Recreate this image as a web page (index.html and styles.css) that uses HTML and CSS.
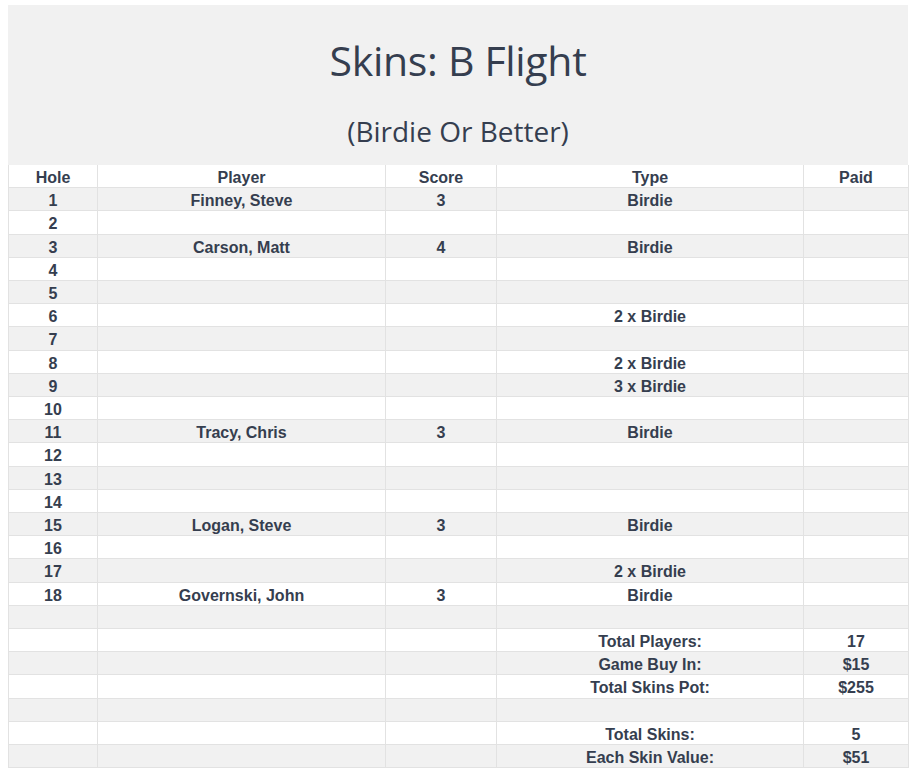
FILE: index.html
```html
<!DOCTYPE html>
<html>
<head>
<meta charset="utf-8">
<link rel="stylesheet" href="styles.css">
</head>
<body>
<div class="page">
  <header class="banner">
    <h1 class="title">Skins: B Flight</h1>
    <h2 class="subtitle">(Birdie Or Better)</h2>
  </header>
  <table class="skins">
    <colgroup>
      <col class="c-hole"><col class="c-player"><col class="c-score"><col class="c-type"><col class="c-paid">
    </colgroup>
    <thead>
      <tr><th>Hole</th><th>Player</th><th>Score</th><th>Type</th><th>Paid</th></tr>
    </thead>
    <tbody>
      <tr><td>1</td><td>Finney, Steve</td><td>3</td><td>Birdie</td><td></td></tr>
      <tr><td>2</td><td></td><td></td><td></td><td></td></tr>
      <tr><td>3</td><td>Carson, Matt</td><td>4</td><td>Birdie</td><td></td></tr>
      <tr><td>4</td><td></td><td></td><td></td><td></td></tr>
      <tr><td>5</td><td></td><td></td><td></td><td></td></tr>
      <tr><td>6</td><td></td><td></td><td>2 x Birdie</td><td></td></tr>
      <tr><td>7</td><td></td><td></td><td></td><td></td></tr>
      <tr><td>8</td><td></td><td></td><td>2 x Birdie</td><td></td></tr>
      <tr><td>9</td><td></td><td></td><td>3 x Birdie</td><td></td></tr>
      <tr><td>10</td><td></td><td></td><td></td><td></td></tr>
      <tr><td>11</td><td>Tracy, Chris</td><td>3</td><td>Birdie</td><td></td></tr>
      <tr><td>12</td><td></td><td></td><td></td><td></td></tr>
      <tr><td>13</td><td></td><td></td><td></td><td></td></tr>
      <tr><td>14</td><td></td><td></td><td></td><td></td></tr>
      <tr><td>15</td><td>Logan, Steve</td><td>3</td><td>Birdie</td><td></td></tr>
      <tr><td>16</td><td></td><td></td><td></td><td></td></tr>
      <tr><td>17</td><td></td><td></td><td>2 x Birdie</td><td></td></tr>
      <tr><td>18</td><td>Governski, John</td><td>3</td><td>Birdie</td><td></td></tr>
      <tr><td></td><td></td><td></td><td></td><td></td></tr>
      <tr><td></td><td></td><td></td><td>Total Players:</td><td>17</td></tr>
      <tr><td></td><td></td><td></td><td>Game Buy In:</td><td>$15</td></tr>
      <tr><td></td><td></td><td></td><td>Total Skins Pot:</td><td>$255</td></tr>
      <tr><td></td><td></td><td></td><td></td><td></td></tr>
      <tr><td></td><td></td><td></td><td>Total Skins:</td><td>5</td></tr>
      <tr><td></td><td></td><td></td><td>Each Skin Value:</td><td>$51</td></tr>
    </tbody>
  </table>
</div>
</body>
</html>
```
FILE: styles.css
```css
html, body {
  margin: 0;
  padding: 0;
  background: #ffffff;
}

.page {
  margin: 5px 8px 0 8px;
  width: 900px;
  color: #353e4f;
}

.banner {
  background: #f1f1f1;
  height: 160px;
  display: flex;
  flex-direction: column;
  align-items: center;
  font-family: "Open Sans", "Noto Sans", sans-serif;
}

.title {
  margin: 30px 0 0 0;
  font-size: 41px;
  font-weight: 400;
  line-height: 50px;
  letter-spacing: -0.3px;
}

.subtitle {
  margin: 27px 0 0 0;
  font-size: 28px;
  font-weight: 400;
  line-height: 38px;
  letter-spacing: 0;
}

.skins {
  width: 900px;
  border-collapse: collapse;
  table-layout: fixed;
  font-family: "Liberation Sans", Arial, sans-serif;
  font-weight: 700;
  font-size: 16px;
}

.c-hole { width: 89px; }
.c-player { width: 288px; }
.c-score { width: 111px; }
.c-type { width: 307px; }
.c-paid { width: 105px; }

.skins th,
.skins td {
  padding: 3px 0 0 0;
  height: 19.2px;
  line-height: 19.2px;
  text-align: center;
  border: 1px solid #e2e2e2;
  border-top: 1px solid #dedede;
  font-weight: 700;
}

.skins thead th {
  background: #ffffff;
  border-top: 0;
}

.skins tbody tr:nth-child(odd) td {
  background: #f1f1f1;
}

.skins tbody tr:nth-child(even) td {
  background: #ffffff;
}
```
